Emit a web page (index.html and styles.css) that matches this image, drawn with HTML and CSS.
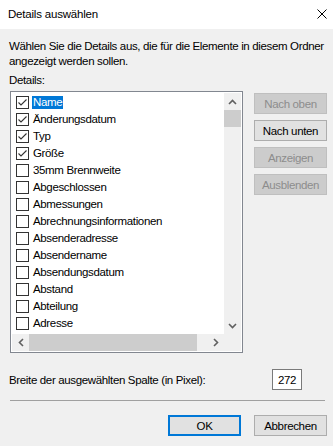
FILE: index.html
```html
<!DOCTYPE html>
<html lang="de">
<head>
    <meta charset="UTF-8">
    <meta name="viewport" content="width=device-width, initial-scale=1.0">
    <title>Details auswählen</title>
    <link rel="stylesheet" href="styles.css">
</head>
<body>
    <div class="window">
        <div class="titlebar">
            <span class="title">Details auswählen</span>
            <svg class="close" width="10" height="10" viewBox="0 0 10 10">
                <path d="M0.5 0.5 L9.5 9.5 M9.5 0.5 L0.5 9.5" stroke="#000" stroke-width="1" fill="none"/>
            </svg>
        </div>

        <div class="content">
            <p class="intro">Wählen Sie die Details aus, die für die Elemente in diesem Ordner angezeigt werden sollen.</p>
            <div class="label">Details:</div>

            <div class="details">
                <div class="listbox">
                    <div class="items">
                        <div class="row"><span class="check checked"></span><span class="name selected">Name</span></div>
                        <div class="row"><span class="check checked"></span><span class="name">Änderungsdatum</span></div>
                        <div class="row"><span class="check checked"></span><span class="name">Typ</span></div>
                        <div class="row"><span class="check checked"></span><span class="name">Größe</span></div>
                        <div class="row"><span class="check"></span><span class="name">35mm Brennweite</span></div>
                        <div class="row"><span class="check"></span><span class="name">Abgeschlossen</span></div>
                        <div class="row"><span class="check"></span><span class="name">Abmessungen</span></div>
                        <div class="row"><span class="check"></span><span class="name">Abrechnungsinformationen</span></div>
                        <div class="row"><span class="check"></span><span class="name">Absenderadresse</span></div>
                        <div class="row"><span class="check"></span><span class="name">Absendername</span></div>
                        <div class="row"><span class="check"></span><span class="name">Absendungsdatum</span></div>
                        <div class="row"><span class="check"></span><span class="name">Abstand</span></div>
                        <div class="row"><span class="check"></span><span class="name">Abteilung</span></div>
                        <div class="row"><span class="check"></span><span class="name">Adresse</span></div>
                        <div class="row"><span class="check"></span></div>
                    </div>

                    <div class="vscroll">
                        <div class="arrow">
                            <svg width="9" height="6" viewBox="0 0 9 6"><polyline points="1,5 4.5,1.5 8,5" stroke="#606060" stroke-width="1.6" fill="none"/></svg>
                        </div>
                        <div class="thumb"></div>
                        <div class="track"></div>
                        <div class="arrow">
                            <svg width="9" height="6" viewBox="0 0 9 6"><polyline points="1,1 4.5,4.5 8,1" stroke="#606060" stroke-width="1.6" fill="none"/></svg>
                        </div>
                    </div>

                    <div class="hscroll">
                        <div class="arrow">
                            <svg width="6" height="9" viewBox="0 0 6 9"><polyline points="5,1 1.5,4.5 5,8" stroke="#606060" stroke-width="1.6" fill="none"/></svg>
                        </div>
                        <div class="thumb"></div>
                        <div class="track"></div>
                        <div class="arrow">
                            <svg width="6" height="9" viewBox="0 0 6 9"><polyline points="1,1 4.5,4.5 1,8" stroke="#606060" stroke-width="1.6" fill="none"/></svg>
                        </div>
                    </div>

                    <div class="corner"></div>
                </div>

                <div class="side-buttons">
                    <button class="btn" disabled>Nach oben</button>
                    <button class="btn">Nach unten</button>
                    <button class="btn" disabled>Anzeigen</button>
                    <button class="btn" disabled>Ausblenden</button>
                </div>
            </div>

            <div class="width-row">
                <span>Breite der ausgewählten Spalte (in Pixel):</span>
                <input class="width-input" type="text" value="272">
            </div>

            <div class="separator"></div>

            <div class="footer">
                <button class="btn default">OK</button>
                <button class="btn">Abbrechen</button>
            </div>
        </div>
    </div>
</body>
</html>
```

FILE: styles.css
```css
* {
    box-sizing: border-box;
}

body {
    margin: 0;
    background: #f0f0f0;
    font-family: 'Liberation Sans', Arial, sans-serif;
    font-size: 11.5px;
    letter-spacing: -0.35px;
    color: #000;
}

.window {
    width: 333px;
    height: 446px;
}

.titlebar {
    height: 29px;
    line-height: 29px;
    background: #fff;
    display: flex;
    align-items: flex-start;
    padding-left: 8px;
}

.title {
    flex: 1;
    letter-spacing: -0.2px;
}

.close {
    margin-top: 9px;
    margin-right: 6px;
}

.content {
    padding: 10px 6px 0 9px;
}

.intro {
    margin: 0;
    line-height: 15px;
}

.label {
    margin-top: 4px;
    line-height: 15px;
}

.details {
    display: flex;
    margin-top: 3px;
}

/* list view */
.listbox {
    margin-left: 1px;
    width: 233px;
    height: 262px;
    border: 1px solid #828790;
    padding: 1px;
    background: #fff;
    display: grid;
    grid-template-columns: 1fr 17px;
    grid-template-rows: 1fr 17px;
}

.items {
    overflow: hidden;
}

.row {
    height: 17px;
    padding-top: 2px;
    display: flex;
    align-items: center;
    white-space: nowrap;
}

.check {
    flex: none;
    width: 13px;
    height: 13px;
    margin-left: 4px;
    border: 1px solid #333;
    background: #fff;
}

.check.checked {
    background: #fff url("data:image/svg+xml;utf8,<svg xmlns='http://www.w3.org/2000/svg' width='11' height='11'><polyline points='1.5,5.5 4,8 9.5,2.5' stroke='%23333' stroke-width='1.1' fill='none'/></svg>") no-repeat center;
}

.name {
    margin-left: 3px;
    padding: 0 1px;
    line-height: 13px;
}

.name.selected {
    background: #0078d7;
    color: #fff;
}

/* scrollbars */
.vscroll,
.hscroll {
    background: #f0f0f0;
    display: flex;
}

.vscroll {
    flex-direction: column;
}

.arrow {
    flex: none;
    width: 17px;
    height: 17px;
    display: flex;
    align-items: center;
    justify-content: center;
}

.vscroll .thumb {
    height: 17px;
    background: #cdcdcd;
}

.hscroll .thumb {
    width: 168px;
    background: #cdcdcd;
}

.track {
    flex: 1;
}

.corner {
    background: #f0f0f0;
}

/* buttons */
.side-buttons {
    margin-left: 11px;
    margin-top: 2px;
    display: flex;
    flex-direction: column;
    gap: 6px;
}

.btn {
    width: 73px;
    height: 21px;
    padding: 0;
    border: 1px solid #adadad;
    background: #e1e1e1;
    font: inherit;
    letter-spacing: inherit;
    color: #000;
}

.btn:disabled {
    background: #cccccc;
    border-color: #bfbfbf;
    color: #8c8c8c;
}

.btn.default {
    border: 2px solid #0078d7;
}

.width-row {
    margin-top: 16px;
    display: flex;
    align-items: center;
}

.width-input {
    margin-left: auto;
    margin-right: 25px;
    width: 30px;
    height: 21px;
    padding: 0;
    border: 1px solid #7a7a7a;
    background: #fff;
    font: inherit;
    letter-spacing: inherit;
    text-align: center;
}

.separator {
    height: 1px;
    margin: 10px 2px 0 1px;
    background: #a0a0a0;
}

.footer {
    margin-top: 14px;
    display: flex;
    justify-content: flex-end;
    gap: 13px;
}
```
